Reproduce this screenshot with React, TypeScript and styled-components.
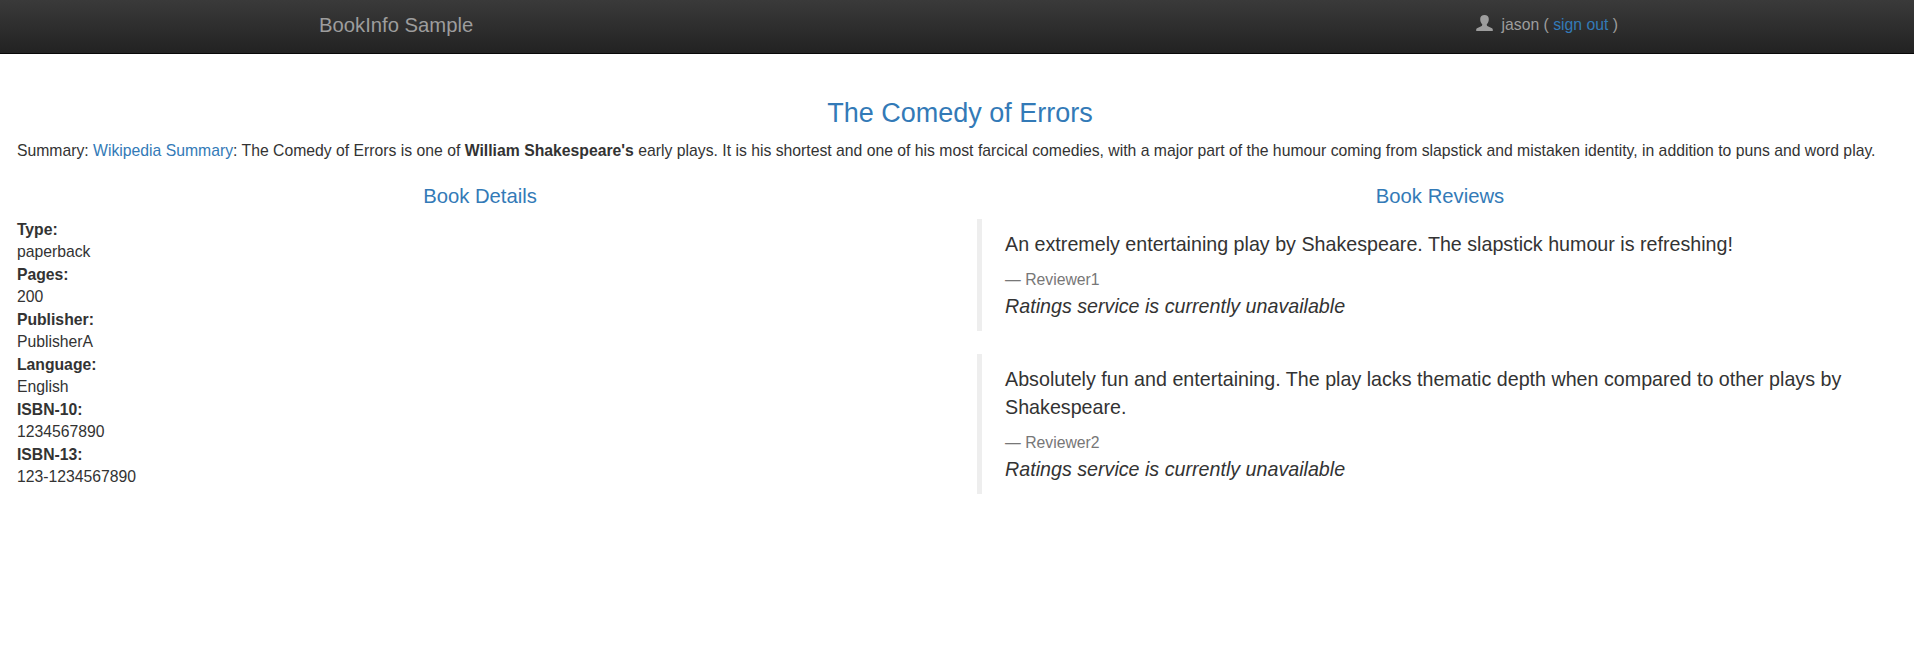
import React from "react";
import styled, { createGlobalStyle } from "styled-components";

const GlobalStyle = createGlobalStyle`
  * { box-sizing: border-box; }
  html { overflow: hidden; }
  body {
    margin: 0;
    width: 1920px;
    background: #fff;
    color: #333;
    font-family: "Liberation Sans", Arial, sans-serif;
    font-size: 15.75px;
    line-height: 22.5px;
  }
`;

const Navbar = styled.nav`
  height: 54px;
  background: linear-gradient(#3a3a3a, #222);
  border-bottom: 1px solid #080808;
  color: #9d9d9d;
`;

const NavContainer = styled.div`
  width: 1316px;
  margin: 0 auto;
  padding: 14px 0 0 17px;
  display: flex;
  justify-content: space-between;
`;

const Brand = styled.span`
  font-size: 20.25px;
`;

const Account = styled.div`
  display: flex;
  align-items: flex-start;
  white-space: pre;
`;

const UserIcon = styled.svg`
  width: 17px;
  height: 16px;
  margin: 1px 9px 0 0;
  fill: currentColor;
`;

const Link = styled.a`
  color: #337ab7;
  text-decoration: none;
`;

const Intro = styled.section`
  padding: 45px 16.875px 0;
`;

const Title = styled.h3`
  margin: 0 0 11.25px;
  color: #337ab7;
  font-size: 27px;
  font-weight: 500;
  line-height: 29.7px;
  text-align: center;
`;

const Summary = styled.p`
  margin: 0 0 11.25px;
  white-space: nowrap;
`;

const Columns = styled.div`
  display: grid;
  grid-template-columns: 1fr 1fr;
`;

const Column = styled.section`
  padding: 11.25px 16.875px 0;
`;

const Heading = styled.h4`
  margin: 0 0 11.45px;
  color: #337ab7;
  font-size: 20.25px;
  font-weight: 500;
  line-height: 22.275px;
  text-align: center;
`;

const Details = styled.dl`
  margin: 0;
  dt { font-weight: 700; }
  dd { margin: 0; }
`;

const Review = styled.blockquote`
  margin: 0 0 22.5px;
  padding: 11.25px 22.5px 11.25px 23.2px;
  border-left: 5px solid #eee;
  font-size: 19.6875px;
  line-height: 28.125px;
`;

const ReviewText = styled.p`
  margin: 0 0 11.25px;
`;

const Reviewer = styled.small`
  display: block;
  color: #777;
  font-size: 15.75px;
  line-height: 22.5px;
`;

const details = [
  ["Type:", "paperback"],
  ["Pages:", "200"],
  ["Publisher:", "PublisherA"],
  ["Language:", "English"],
  ["ISBN-10:", "1234567890"],
  ["ISBN-13:", "123-1234567890"],
];

const reviews = [
  {
    name: "Reviewer1",
    text: "An extremely entertaining play by Shakespeare. The slapstick humour is refreshing!",
  },
  {
    name: "Reviewer2",
    text: "Absolutely fun and entertaining. The play lacks thematic depth when compared to other plays by Shakespeare.",
  },
];

export default function App() {
  return (
    <>
      <GlobalStyle />
      <Navbar>
        <NavContainer>
          <Brand>BookInfo Sample</Brand>
          <Account>
            <UserIcon viewBox="0 0 17 16" aria-hidden="true">
              <path d="M8.500 0C5.900 0 4.200 1.300 4.200 4c0 2.400.7 4 2 5.200v.8c0 .6-.4.9-1 1.200l-3.700 1.700C.6 13.300.2 13.800.2 14.600V16h16.600v-1.400c0-.8-.4-1.300-1.300-1.700l-3.700-1.700c-.6-.3-1-.6-1-1.200v-.8c1.300-1.200 2-2.800 2-5.200 0-2.700-1.700-4-4.300-4Z" />
            </UserIcon>
            <span>jason ( <Link>sign out</Link> )</span>
          </Account>
        </NavContainer>
      </Navbar>
      <Intro>
        <Title>The Comedy of Errors</Title>
        <Summary>
          Summary: <Link>Wikipedia Summary</Link>: The Comedy of Errors is one of{" "}
          <b>William Shakespeare's</b> early plays. It is his shortest and one of his most
          farcical comedies, with a major part of the humour coming from slapstick and
          mistaken identity, in addition to puns and word play.
        </Summary>
      </Intro>
      <Columns>
        <Column>
          <Heading>Book Details</Heading>
          <Details>
            {details.map(([term, value]) => (
              <React.Fragment key={term}>
                <dt>{term}</dt>
                <dd>{value}</dd>
              </React.Fragment>
            ))}
          </Details>
        </Column>
        <Column>
          <Heading>Book Reviews</Heading>
          {reviews.map(({ name, text }) => (
            <Review key={name}>
              <ReviewText>{text}</ReviewText>
              <Reviewer>— {name}</Reviewer>
              <i>Ratings service is currently unavailable</i>
            </Review>
          ))}
        </Column>
      </Columns>
    </>
  );
}
